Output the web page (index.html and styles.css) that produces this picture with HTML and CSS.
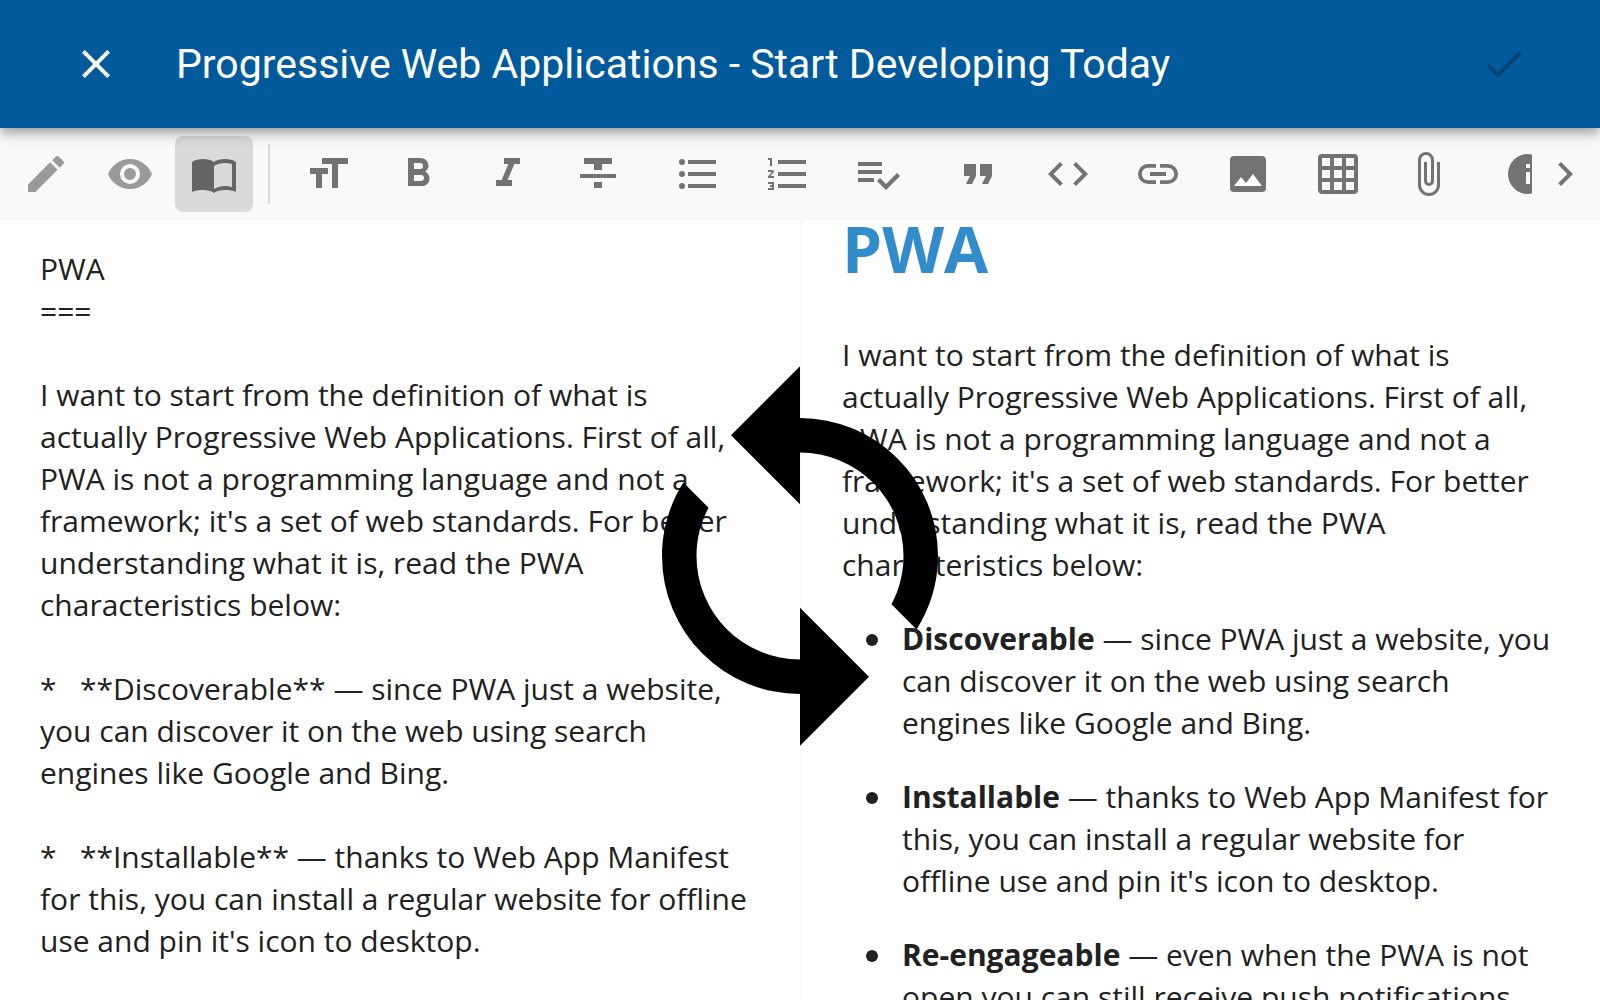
FILE: index.html
```html
<!DOCTYPE html>
<html lang="en">
<head>
<meta charset="utf-8">
<meta name="viewport" content="width=device-width, initial-scale=1">
<title>Progressive Web Applications - Start Developing Today</title>
<link rel="stylesheet" href="styles.css">
</head>
<body>
<header class="appbar">
  <button class="icon-btn" type="button" aria-label="Close"><svg class="icon" viewBox="0 0 24 24"><path d="M19,6.41L17.59,5L12,10.59L6.41,5L5,6.41L10.59,12L5,17.59L6.41,19L12,13.41L17.59,19L19,17.59L13.41,12L19,6.41Z"/></svg></button>
  <h1 class="title">Progressive Web Applications - Start Developing Today</h1>
  <button class="icon-btn" type="button" aria-label="Save" disabled><svg class="icon" viewBox="0 0 24 24"><path d="M9,16.17L4.83,12L3.41,13.41L9,19L21,7L19.59,5.59L9,16.17Z"/></svg></button>
</header>

<div class="toolbar" role="toolbar" aria-label="Formatting">
  <div class="modes">
    <button class="tool" type="button" aria-label="Edit"><svg class="icon" viewBox="0 0 24 24"><path d="M20.71,7.04C21.1,6.65 21.1,6 20.71,5.63L18.37,3.29C18,2.9 17.35,2.9 16.96,3.29L15.12,5.12L18.87,8.87M3,17.25V21H6.75L17.81,9.93L14.06,6.18L3,17.25Z"/></svg></button>
    <button class="tool" type="button" aria-label="Preview"><svg class="icon" viewBox="0 0 24 24"><path d="M12,9A3,3 0 0,0 9,12A3,3 0 0,0 12,15A3,3 0 0,0 15,12A3,3 0 0,0 12,9M12,17A5,5 0 0,1 7,12A5,5 0 0,1 12,7A5,5 0 0,1 17,12A5,5 0 0,1 12,17M12,4.5C7,4.5 2.73,7.61 1,12C2.73,16.39 7,19.5 12,19.5C17,19.5 21.27,16.39 23,12C21.27,7.61 17,4.5 12,4.5Z"/></svg></button>
    <button class="tool active" type="button" aria-label="Split view" aria-pressed="true"><svg class="icon" viewBox="0 0 24 24"><path fill-rule="evenodd" d="M12,6C13.45,4.9 15.55,4.5 17.5,4.5C19.45,4.5 21.55,4.9 23,6V21C21.5,20.3 19.5,20 17.5,20C15.55,20 13.45,20.4 12,21.5C10.55,20.4 8.45,20 6.5,20C4.5,20 2.5,20.3 1,21V6C2.45,4.9 4.55,4.5 6.5,4.5C8.45,4.5 10.55,4.9 12,6M12,8V19.5C13.35,18.65 15.8,18 17.5,18C18.7,18 19.9,18.15 21,18.5V7C19.9,6.65 18.7,6.5 17.5,6.5C15.8,6.5 13.35,7.15 12,8Z"/></svg></button>
  </div>
  <div class="formats">
    <div class="group">
      <button class="tool" type="button" aria-label="Heading"><svg class="icon" viewBox="0 0 24 24"><path d="M3,12H6V19H9V12H12V9H3M9,4V7H14V19H17V7H22V4H9Z"/></svg></button>
      <button class="tool" type="button" aria-label="Bold"><svg class="icon" viewBox="0 0 24 24"><path d="M13.5,15.5H10V12.5H13.5A1.5,1.5 0 0,1 15,14A1.5,1.5 0 0,1 13.5,15.5M10,6.5H13A1.5,1.5 0 0,1 14.5,8A1.5,1.5 0 0,1 13,9.5H10M15.6,10.79C16.57,10.11 17.25,9 17.25,8C17.25,5.74 15.5,4 13.25,4H7V18H14.04C16.14,18 17.75,16.3 17.75,14.21C17.75,12.69 16.89,11.39 15.6,10.79Z"/></svg></button>
      <button class="tool" type="button" aria-label="Italic"><svg class="icon" viewBox="0 0 24 24"><path d="M10,4V7H12.21L8.79,15H6V18H14V15H11.79L15.21,7H18V4H10Z"/></svg></button>
      <button class="tool" type="button" aria-label="Strikethrough"><svg class="icon" viewBox="0 0 24 24"><path d="M3,14H21V12H3M5,4V7H10V10H14V7H19V4M10,19H14V16H10V19Z"/></svg></button>
    </div>
    <div class="group">
      <button class="tool" type="button" aria-label="Bulleted list"><svg class="icon" viewBox="0 0 24 24"><path d="M7,5H21V7H7V5M7,13V11H21V13H7M4,4.5A1.5,1.5 0 0,1 5.5,6A1.5,1.5 0 0,1 4,7.5A1.5,1.5 0 0,1 2.5,6A1.5,1.5 0 0,1 4,4.5M4,10.5A1.5,1.5 0 0,1 5.5,12A1.5,1.5 0 0,1 4,13.5A1.5,1.5 0 0,1 2.5,12A1.5,1.5 0 0,1 4,10.5M7,19V17H21V19H7M4,16.5A1.5,1.5 0 0,1 5.5,18A1.5,1.5 0 0,1 4,19.5A1.5,1.5 0 0,1 2.5,18A1.5,1.5 0 0,1 4,16.5Z"/></svg></button>
      <button class="tool" type="button" aria-label="Numbered list"><svg class="icon" viewBox="0 0 24 24"><path d="M7,13V11H21V13H7M7,19V17H21V19H7M7,7V5H21V7H7M3,8V5H2V4H4V8H3M2,17V16H5V20H2V19H4V18.5H3V17.5H4V17H2M4.25,10A0.75,0.75 0 0,1 5,10.75C5,10.95 4.92,11.14 4.79,11.27L3.12,13H5V14H2V13.08L4,11H2V10H4.25Z"/></svg></button>
      <button class="tool" type="button" aria-label="Task list"><svg class="icon" viewBox="0 0 24 24"><path d="M14,10H2V12H14V10M14,6H2V8H14V6M2,16H10V14H2V16M21.5,11.5L23,13L16,20L11.5,15.5L13,14L16,17L21.5,11.5Z"/></svg></button>
    </div>
    <div class="group">
      <button class="tool" type="button" aria-label="Quote"><svg class="icon" viewBox="0 0 24 24"><path d="M14,17H17L19,13V7H13V13H16M6,17H9L11,13V7H5V13H8L6,17Z"/></svg></button>
      <button class="tool" type="button" aria-label="Code"><svg class="icon" viewBox="0 0 24 24"><path d="M14.6,16.6L19.2,12L14.6,7.4L16,6L22,12L16,18L14.6,16.6M9.4,16.6L4.8,12L9.4,7.4L8,6L2,12L8,18L9.4,16.6Z"/></svg></button>
      <button class="tool" type="button" aria-label="Link"><svg class="icon" viewBox="0 0 24 24"><path d="M3.9,12C3.9,10.29 5.29,8.9 7,8.9H11V7H7A5,5 0 0,0 2,12A5,5 0 0,0 7,17H11V15.1H7C5.29,15.1 3.9,13.71 3.9,12M8,13H16V11H8V13M17,7H13V8.9H17C18.71,8.9 20.1,10.29 20.1,12C20.1,13.71 18.71,15.1 17,15.1H13V17H17A5,5 0 0,0 22,12A5,5 0 0,0 17,7Z"/></svg></button>
      <button class="tool" type="button" aria-label="Image"><svg class="icon" viewBox="0 0 24 24"><path d="M8.5,13.5L11,16.5L14.5,12L19,18H5M21,19V5C21,3.89 20.1,3 19,3H5A2,2 0 0,0 3,5V19A2,2 0 0,0 5,21H19A2,2 0 0,0 21,19Z"/></svg></button>
      <button class="tool" type="button" aria-label="Table"><svg class="icon" viewBox="0 0 24 24"><path d="M10,4V8H14V4H10M16,4V8H20V4H16M16,10V14H20V10H16M16,16V20H20V16H16M14,20V16H10V20H14M8,20V16H4V20H8M8,14V10H4V14H8M8,8V4H4V8H8M10,14H14V10H10V14M4,2H20A2,2 0 0,1 22,4V20A2,2 0 0,1 20,22H4C2.92,22 2,21.1 2,20V4A2,2 0 0,1 4,2Z"/></svg></button>
      <button class="tool" type="button" aria-label="Attachment"><svg class="icon" viewBox="0 0 24 24"><path d="M16.5,6V17.5A4,4 0 0,1 12.5,21.5A4,4 0 0,1 8.5,17.5V5A2.5,2.5 0 0,1 11,2.5A2.5,2.5 0 0,1 13.5,5V15.5A1,1 0 0,1 12.5,16.5A1,1 0 0,1 11.5,15.5V6H10V15.5A2.5,2.5 0 0,0 12.5,18A2.5,2.5 0 0,0 15,15.5V5A4,4 0 0,0 11,1A4,4 0 0,0 7,5V17.5A5.5,5.5 0 0,0 12.5,23A5.5,5.5 0 0,0 18,17.5V6H16.5Z"/></svg></button>
    </div>
    <div class="group">
      <button class="tool" type="button" aria-label="Info"><svg class="icon" viewBox="0 0 24 24"><path d="M13,9H11V7H13M13,17H11V11H13M12,2A10,10 0 0,0 2,12A10,10 0 0,0 12,22A10,10 0 0,0 22,12A10,10 0 0,0 12,2Z"/></svg></button>
    </div>
  </div>
  <button class="more" type="button" aria-label="Scroll tools right"><svg class="icon" viewBox="0 0 24 24"><path d="M8.59,16.58L13.17,12L8.59,7.41L10,6L16,12L10,18L8.59,16.58Z"/></svg></button>
</div>

<main class="editor">
  <textarea class="source" aria-label="Markdown source" spellcheck="false">
PWA
===

I want to start from the definition of what is actually Progressive Web Applications. First of all, PWA is not a programming language and not a framework; it's a set of web standards. For better understanding what it is, read the PWA characteristics below:

*   **Discoverable** — since PWA just a website, you can discover it on the web using search engines like Google and Bing.

*   **Installable** — thanks to Web App Manifest for this, you can install a regular website for offline use and pin it's icon to desktop.</textarea>
  <article class="preview">
    <h2>PWA</h2>
    <p>I want to start from the definition of what is actually Progressive Web Applications. First of all, PWA is not a programming language and not a framework; it's a set of web standards. For better understanding what it is, read the PWA characteristics below:</p>
    <ul>
      <li><strong>Discoverable</strong> — since PWA just a website, you can discover it on the web using search engines like Google and Bing.</li>
      <li><strong>Installable</strong> — thanks to Web App Manifest for this, you can install a regular website for offline use and pin it's icon to desktop.</li>
      <li><strong>Re-engageable</strong> — even when the PWA is not open you can still receive push notifications.</li>
    </ul>
  </article>
  <svg class="sync" viewBox="0 0 24 24" aria-hidden="true"><path d="M12,18A6,6 0 0,1 6,12C6,11 6.25,10.03 6.7,9.2L5.24,7.74C4.46,8.97 4,10.43 4,12A8,8 0 0,0 12,20V23L16,19L12,15M12,4V1L8,5L12,9V6A6,6 0 0,1 18,12C18,13 17.75,13.97 17.3,14.8L18.76,16.26C19.54,15.03 20,13.57 20,12A8,8 0 0,0 12,4Z"/></svg>
</main>
</body>
</html>
```
FILE: styles.css
```css
* { box-sizing: border-box; }

body {
  margin: 0;
  height: 100vh;
  display: flex;
  flex-direction: column;
  overflow: hidden;
  background: #fff;
  color: #212121;
  font-family: "Open Sans", "Noto Sans", sans-serif;
  font-size: 30px;
  line-height: 42px;
}

button {
  border: 0;
  padding: 0;
  background: none;
  color: inherit;
}

.icon {
  display: block;
  width: 48px;
  height: 48px;
  fill: currentColor;
}

/* App bar */
.appbar {
  position: relative;
  z-index: 1;
  flex: none;
  display: flex;
  align-items: center;
  gap: 32px;
  height: 128px;
  padding: 0 48px;
  background: #005a9c;
  color: #fff;
  box-shadow: 0 4px 8px -2px rgba(0, 0, 0, .2), 0 8px 10px rgba(0, 0, 0, .14), 0 2px 20px rgba(0, 0, 0, .12);
}

.icon-btn {
  display: grid;
  place-items: center;
  width: 96px;
  height: 96px;
}

.icon-btn:disabled { color: rgba(0, 0, 0, .26); }

.title {
  flex: 1;
  margin: 0;
  font: 400 41px/48px Roboto, sans-serif;
}

/* Formatting toolbar */
.toolbar {
  flex: none;
  display: flex;
  align-items: center;
  height: 92px;
  background: #f9f9f9;
  color: #737373;
}

.modes {
  display: flex;
  gap: 6px;
  padding: 0 15px 0 7px;
  color: #9a9a9a;
}

.tool {
  flex: none;
  display: grid;
  place-items: center;
  width: 78px;
  height: 76px;
  border-radius: 8px;
}

.tool.active {
  background: #dadada;
  color: #656565;
}

.formats {
  flex: 1;
  min-width: 0;
  display: flex;
  align-items: center;
  gap: 22px;
  height: 60px;
  padding-left: 19px;
  border-left: 2px solid #dadada;
  overflow: hidden;
}

.group {
  flex: none;
  display: flex;
  gap: 12px;
}

.more {
  flex: none;
  display: grid;
  place-items: center;
  width: 68px;
  height: 76px;
  padding-right: 2px;
}

/* Split editor */
.editor {
  position: relative;
  flex: 1;
  min-height: 0;
  display: grid;
  grid-template-columns: 1fr 1fr;
}

.source {
  display: block;
  width: 100%;
  height: 100%;
  margin: 0;
  padding: 28px 40px 0;
  border: 0;
  outline: 0;
  resize: none;
  overflow: hidden;
  background: none;
  color: inherit;
  font: inherit;
}

.preview {
  min-width: 0;
  padding: 0 40px;
  border-left: 2px solid #f9f9f9;
  overflow: hidden;
}

.preview h2 {
  margin: 0 0 56px;
  color: #328ccc;
  font-size: 64px;
  font-weight: 700;
  line-height: 58px;
}

.preview p { margin: 0 0 32px; }

.preview ul {
  margin: 0;
  padding-left: 60px;
  list-style: none;
}

.preview li { margin-bottom: 32px; }

.preview li::before {
  content: "";
  display: inline-block;
  width: 12px;
  height: 12px;
  margin: 0 24px 0 -36px;
  border-radius: 50%;
  background: #212121;
  vertical-align: 4px;
}

.sync {
  position: absolute;
  top: 129px;
  left: 50%;
  width: 414px;
  height: 414px;
  margin-left: -207px;
  pointer-events: none;
}
```
